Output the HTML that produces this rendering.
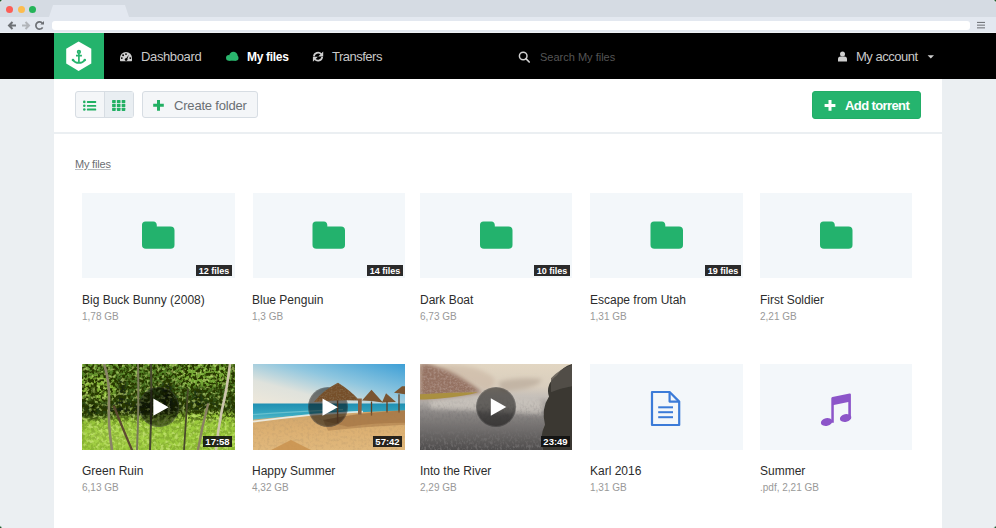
<!DOCTYPE html>
<html><head><meta charset="utf-8">
<style>
*{margin:0;padding:0;box-sizing:border-box}
html,body{width:996px;height:528px;overflow:hidden;background:#ebeff2;font-family:"Liberation Sans",sans-serif}
.a{position:absolute}
svg{display:block;overflow:visible}
#tabbar{left:0;top:0;width:996px;height:17px;background:#d5dbe3}
#tab{left:49px;top:5px;width:80px;height:12px;background:#e3e8f0;clip-path:polygon(4px 0,76px 0,80px 12px,0 12px)}
#toolbar{left:0;top:17px;width:996px;height:16px;background:#e3e8f0}
#url{left:52px;top:21px;width:918px;height:9px;background:#fff;border-radius:3px}
#nav{left:0;top:33px;width:996px;height:46px;background:#000}
#logo{left:54px;top:33px;width:50px;height:46px;background:#24b36c}
#content{left:54px;top:79px;width:888px;height:449px;background:#fff}
.navtxt{font-size:13px;color:#c9c9c9;line-height:14px;white-space:nowrap}
.btn{border:1px solid #d7dde3;background:#f4f6f8;border-radius:3px}
.thumb{width:153px;height:85px;background:#f3f7fa;overflow:hidden}
.title{font-size:12px;color:#2c2c2c;line-height:14px;white-space:nowrap}
.size{font-size:10px;color:#999;line-height:12px;white-space:nowrap}
.badge{background:#2a2a2a;color:#fff;font-size:9px;font-weight:bold;line-height:12px;height:11px;overflow:hidden;text-align:center;white-space:nowrap}
.dur{background:rgba(15,15,15,.88);color:#fff;font-size:9.5px;font-weight:bold;line-height:12px;height:11px;overflow:hidden;text-align:center;white-space:nowrap}
.play{width:40px;height:40px;border-radius:50%;background:rgba(0,0,0,.5);border:1px solid rgba(255,255,255,.1)}
</style></head><body>
<div class="a" id="tabbar"></div>
<div class="a" id="tab"></div>
<div class="a" id="toolbar"></div>
<div class="a" style="left:0;top:32px;width:996px;height:1px;background:#eef1f5"></div>
<div class="a" id="url"></div>
<!-- traffic lights -->
<div class="a" style="left:6px;top:6px;width:7px;height:7px;border-radius:50%;background:#fc5e57"></div>
<div class="a" style="left:18px;top:6px;width:7px;height:7px;border-radius:50%;background:#fcbc4f"></div>
<div class="a" style="left:29px;top:6px;width:7px;height:7px;border-radius:50%;background:#25b459"></div>
<!-- toolbar icons -->
<svg class="a" style="left:0;top:17px" width="996" height="16">
 <g fill="none" stroke-width="2" stroke-linecap="butt">
  <path d="M16 8.5H10 M12.5 5 L9 8.5 L12.5 12" stroke="#6d7075"/>
  <path d="M22 8.5H28 M25.5 5 L29 8.5 L25.5 12" stroke="#b2b5ba"/>
  <path d="M42.4 6.4 A3.6 3.6 0 1 0 42.6 10.3" stroke="#6d7075" stroke-width="1.7"/>
 </g>
 <path d="M44 3.9 V7.5 H40.4 Z" fill="#6d7075"/>
 <g fill="#75787d"><rect x="977" y="4.9" width="8" height="1.1"/><rect x="977" y="7.6" width="8" height="1.1"/><rect x="977" y="10.3" width="8" height="1.1"/></g>
</svg>

<div class="a" id="nav"></div>
<div class="a" id="logo"></div>
<svg class="a" style="left:54px;top:33px" width="50" height="46">
 <polygon points="24.6,8.5 37.3,15.8 37.3,30.6 24.6,37.9 12.2,30.6 12.2,15.8" fill="#fff"/>
 <g stroke="#24b36c" fill="none" stroke-width="1.7">
  <circle cx="24.9" cy="18.9" r="1.3"/>
  <path d="M24.9 20.2 V29.6 M22 22.6 H27.9"/>
  <path d="M19.2 27.2 Q21 29.9 24.9 29.9 Q28.8 29.9 30.6 27.2"/>
 </g>
 <g fill="#24b36c"><circle cx="19" cy="27" r="1.3"/><circle cx="30.8" cy="27" r="1.3"/></g>
</svg>
<div class="a" id="content"></div>

<!-- nav icons -->
<svg class="a" style="left:0;top:33px" width="996" height="46">
 <!-- gauge -->
 <path d="M120 27.6 V25 A6 6 0 0 1 132 25 V27.6 Q132 28.2 131.4 28.2 H120.6 Q120 28.2 120 27.6 Z" fill="#cfcfcf"/>
 <g fill="#000"><circle cx="126" cy="21.1" r="0.95"/><circle cx="123.1" cy="22.3" r="0.95"/><circle cx="121.8" cy="25.1" r="0.95"/><circle cx="130.3" cy="25.1" r="0.95"/></g>
 <path d="M125.3 26.6 L128.9 21.7 L127 27 Z" fill="#000"/><circle cx="126.1" cy="26.6" r="1.3" fill="#000"/>
 <!-- cloud -->
 <g fill="#2ab56d"><circle cx="228.9" cy="24.8" r="2.9"/><circle cx="233.4" cy="23" r="4.2"/><circle cx="235.8" cy="25" r="2.7"/><rect x="228.9" y="24" width="7" height="3.7"/></g>
 <!-- refresh -->
 <g fill="none" stroke="#cfcfcf" stroke-width="1.7">
  <path d="M313.9 23.4 A4.2 4.2 0 0 1 321.2 21"/>
  <path d="M322.2 23.8 A4.2 4.2 0 0 1 314.9 26.2"/>
 </g>
 <path d="M323.2 18.4 V23.4 H318.2 Z M312.9 28.8 V23.8 H317.9 Z" fill="#cfcfcf"/>
 <!-- search -->
 <circle cx="523.2" cy="23" r="3.8" fill="none" stroke="#cfcfcf" stroke-width="1.5"/>
 <path d="M525.9 25.7 L529.2 29" stroke="#cfcfcf" stroke-width="1.7" stroke-linecap="round"/>
 <!-- user -->
 <circle cx="842.5" cy="21" r="2.5" fill="#cfcfcf"/>
 <path d="M838 28.5 V26 Q838 23.4 840.6 23.4 H844.4 Q847 23.4 847 26 V28.5 Z" fill="#cfcfcf"/>
 <!-- caret -->
 <path d="M927.6 22.2 H934 L930.8 25.4 Z" fill="#cfcfcf"/>
</svg>

<div class="a navtxt" style="left:141px;top:50px;letter-spacing:-0.37px">Dashboard</div>
<div class="a navtxt" style="left:247px;top:50px;color:#fff;font-weight:bold;font-size:12px;letter-spacing:-0.3px">My files</div>
<div class="a navtxt" style="left:332px;top:50px;letter-spacing:-0.5px">Transfers</div>
<div class="a navtxt" style="left:540px;top:50px;font-size:11px;color:#555">Search My files</div>
<div class="a navtxt" style="left:856px;top:50px;letter-spacing:-0.49px">My account</div>

<!-- toolbar buttons -->
<div class="a btn" style="left:75px;top:91px;width:59px;height:27px"></div>
<div class="a" style="left:104px;top:92px;width:29px;height:25px;background:#e9eef2;border-left:1px solid #d7dde3"></div>
<svg class="a" style="left:75px;top:91px" width="60" height="27">
 <g fill="#22b063">
  <circle cx="9.3" cy="10.9" r="1.3"/><circle cx="9.3" cy="14.8" r="1.3"/><circle cx="9.3" cy="18.5" r="1.3"/>
  <rect x="11.9" y="10" width="9.3" height="1.9" rx=".6"/><rect x="11.9" y="13.9" width="9.3" height="1.9" rx=".6"/><rect x="11.9" y="17.6" width="9.3" height="1.9" rx=".6"/>
  <rect x="37.1" y="8.9" width="3.6" height="3.2" rx=".6"/><rect x="41.9" y="8.9" width="3.6" height="3.2" rx=".6"/><rect x="46.7" y="8.9" width="3.6" height="3.2" rx=".6"/>
  <rect x="37.1" y="12.8" width="3.6" height="3.2" rx=".6"/><rect x="41.9" y="12.8" width="3.6" height="3.2" rx=".6"/><rect x="46.7" y="12.8" width="3.6" height="3.2" rx=".6"/>
  <rect x="37.1" y="16.7" width="3.6" height="3.2" rx=".6"/><rect x="41.9" y="16.7" width="3.6" height="3.2" rx=".6"/><rect x="46.7" y="16.7" width="3.6" height="3.2" rx=".6"/>
 </g>
</svg>
<div class="a btn" style="left:142px;top:91px;width:116px;height:27px"></div>
<svg class="a" style="left:142px;top:91px" width="30" height="27">
 <path d="M16.5 9 V19.7 M11.2 14.35 H21.8" stroke="#22b063" stroke-width="3"/>
</svg>
<div class="a" style="left:174px;top:99px;font-size:13px;color:#6a6f74;line-height:14px;letter-spacing:-0.19px;white-space:nowrap">Create folder</div>
<div class="a" style="left:812px;top:91px;width:109px;height:28px;background:#25b46e;border-radius:3px;border:1px solid #22ad67"></div>
<svg class="a" style="left:812px;top:91px" width="30" height="28">
 <path d="M18 9 V19.8 M12.6 14.4 H23.4" stroke="#fff" stroke-width="3"/>
</svg>
<div class="a" style="left:845px;top:99px;font-size:13px;color:#fff;font-weight:bold;line-height:14px;letter-spacing:-0.6px;white-space:nowrap">Add torrent</div>
<div class="a" style="left:54px;top:132px;width:888px;height:2px;background:#ebeff2"></div>

<div class="a" style="left:75px;top:158px;font-size:11px;color:#6b6e72;line-height:13px;text-decoration:underline;text-decoration-color:#b9bcbf;letter-spacing:-0.2px;white-space:nowrap">My files</div>

<!-- row 1 -->
<div class="a thumb" style="left:82px;top:193px"></div>
<div class="a thumb" style="left:253px;top:193px;width:152px"></div>
<div class="a thumb" style="left:420px;top:193px;width:152px"></div>
<div class="a thumb" style="left:590px;top:193px"></div>
<div class="a thumb" style="left:760px;top:193px;width:152px"></div>
<svg class="a" style="left:0;top:0" width="996" height="528">
 <path transform="translate(142 221.5)" d="M0 3.5 Q0 0 3.5 0 H11.5 Q14.5 0 14.8 3.5 L14.8 5 H28.5 Q32.5 5 32.5 9 V23.5 Q32.5 27.3 28.5 27.3 H4 Q0 27.3 0 23.5 Z" fill="#23b26d"/>
 <path transform="translate(312.5 221.5)" d="M0 3.5 Q0 0 3.5 0 H11.5 Q14.5 0 14.8 3.5 L14.8 5 H28.5 Q32.5 5 32.5 9 V23.5 Q32.5 27.3 28.5 27.3 H4 Q0 27.3 0 23.5 Z" fill="#23b26d"/>
 <path transform="translate(480 221.5)" d="M0 3.5 Q0 0 3.5 0 H11.5 Q14.5 0 14.8 3.5 L14.8 5 H28.5 Q32.5 5 32.5 9 V23.5 Q32.5 27.3 28.5 27.3 H4 Q0 27.3 0 23.5 Z" fill="#23b26d"/>
 <path transform="translate(650.5 221.5)" d="M0 3.5 Q0 0 3.5 0 H11.5 Q14.5 0 14.8 3.5 L14.8 5 H28.5 Q32.5 5 32.5 9 V23.5 Q32.5 27.3 28.5 27.3 H4 Q0 27.3 0 23.5 Z" fill="#23b26d"/>
 <path transform="translate(820 221.5)" d="M0 3.5 Q0 0 3.5 0 H11.5 Q14.5 0 14.8 3.5 L14.8 5 H28.5 Q32.5 5 32.5 9 V23.5 Q32.5 27.3 28.5 27.3 H4 Q0 27.3 0 23.5 Z" fill="#23b26d"/>
</svg>
<div class="a badge" style="left:196px;top:265px;width:36px">12 files</div>
<div class="a badge" style="left:367px;top:265px;width:36px">14 files</div>
<div class="a badge" style="left:534px;top:265px;width:36px">10 files</div>
<div class="a badge" style="left:705px;top:265px;width:36px">19 files</div>

<div class="a title" style="left:82px;top:292.5px">Big Buck Bunny (2008)</div>
<div class="a size" style="left:82px;top:311px">1,78 GB</div>
<div class="a title" style="left:252px;top:292.5px">Blue Penguin</div>
<div class="a size" style="left:252px;top:311px">1,3 GB</div>
<div class="a title" style="left:420px;top:292.5px">Dark Boat</div>
<div class="a size" style="left:420px;top:311px">6,73 GB</div>
<div class="a title" style="left:590px;top:292.5px">Escape from Utah</div>
<div class="a size" style="left:590px;top:311px">1,31 GB</div>
<div class="a title" style="left:760px;top:292.5px">First Soldier</div>
<div class="a size" style="left:760px;top:311px">2,21 GB</div>

<!-- row 2 -->
<svg class="a" style="left:82px;top:364px" width="153" height="86" viewBox="0 0 153 85" preserveAspectRatio="none">
 <defs>
  <filter id="bl1" x="-20%" y="-20%" width="140%" height="140%"><feGaussianBlur stdDeviation="2.2"/></filter>
  <filter id="bl2" x="-20%" y="-20%" width="140%" height="140%"><feGaussianBlur stdDeviation="0.6"/></filter>
  <filter id="tx1" x="0" y="0" width="100%" height="100%"><feTurbulence type="fractalNoise" baseFrequency="0.32" numOctaves="2" seed="7"/><feColorMatrix type="matrix" values="0 0 0 0 0.02  0 0 0 0 0.04  0 0 0 0 0.0  0 0 -6 0 3.5"/></filter>
  <filter id="tx2" x="0" y="0" width="100%" height="100%"><feTurbulence type="fractalNoise" baseFrequency="0.28" numOctaves="2" seed="11"/><feColorMatrix type="matrix" values="0 0 0 0 0.66  0 0 0 0 0.86  0 0 0 0 0.24  5 0 0 0 -2.6"/></filter>
  <linearGradient id="g1" x1="0" y1="0" x2="0" y2="1">
   <stop offset="0" stop-color="#5a8a28"/><stop offset=".35" stop-color="#3e621c"/><stop offset=".52" stop-color="#253c10"/><stop offset=".6" stop-color="#3a5818"/><stop offset=".68" stop-color="#8dbd38"/><stop offset="1" stop-color="#98c63c"/>
  </linearGradient>
  <clipPath id="c1"><rect width="153" height="85"/></clipPath>
  <linearGradient id="m1g" x1="0" y1="0" x2="0" y2="1"><stop offset="0" stop-color="#fff"/><stop offset=".55" stop-color="#fff"/><stop offset=".7" stop-color="#333"/><stop offset="1" stop-color="#222"/></linearGradient>
  <mask id="m1"><rect width="153" height="85" fill="url(#m1g)"/></mask>
 </defs>
 <g clip-path="url(#c1)">
 <rect width="153" height="85" fill="url(#g1)"/>
 <g filter="url(#bl1)">
  <ellipse cx="16" cy="24" rx="18" ry="13" fill="#88b838"/>
  <ellipse cx="122" cy="12" rx="28" ry="11" fill="#74a834"/>
  <ellipse cx="60" cy="44" rx="38" ry="7" fill="#1c2a0a"/>
  <ellipse cx="112" cy="42" rx="26" ry="6" fill="#22340e"/>
  <rect x="8" y="20" width="6" height="36" fill="#101a06"/>
  <rect x="36" y="15" width="8" height="40" fill="#152008"/>
  <rect x="80" y="18" width="10" height="34" fill="#142008"/>
  <rect x="112" y="22" width="8" height="28" fill="#18260a"/>
  <path d="M0 56 Q30 51 60 53 Q100 48 153 47 V85 H0 Z" fill="#9ccb3e"/>
  <ellipse cx="35" cy="72" rx="30" ry="10" fill="#a6d246"/>
 </g>
 <g mask="url(#m1)"><rect width="153" height="85" filter="url(#tx1)"/></g>
 <rect width="153" height="85" filter="url(#tx2)" opacity=".55"/>
 <g filter="url(#bl2)" stroke-linecap="round" fill="none">
  <path d="M22 0 Q28 18 27 38 Q26 60 30 85" stroke="#8a8468" stroke-width="2.6"/>
  <path d="M32 42 Q40 62 50 85" stroke="#5c4a30" stroke-width="2.2"/>
  <path d="M56 0 Q57 40 55 85" stroke="#7a7a5a" stroke-width="2"/>
  <path d="M69 0 Q70 40 68 85" stroke="#4a4a30" stroke-width="2"/>
  <path d="M106 25 Q104 55 102 85" stroke="#4a4a2a" stroke-width="1.8"/>
  <path d="M126 40 Q120 62 116 85" stroke="#8a8064" stroke-width="2.4"/>
  <path d="M148 0 Q145 25 140 45 Q136 65 134 85" stroke="#cdc5ad" stroke-width="2.6"/>
 </g>
 </g>
</svg>
<svg class="a" style="left:253px;top:364px" width="152" height="86" viewBox="0 0 152 85" preserveAspectRatio="none">
 <defs>
  <linearGradient id="sky" x1="0" y1="1" x2="1" y2="0">
   <stop offset="0" stop-color="#efe8da"/><stop offset=".3" stop-color="#dfe2dc"/><stop offset=".6" stop-color="#8ec6df"/><stop offset="1" stop-color="#3d9fd6"/>
  </linearGradient>
  <linearGradient id="sea" x1="0" y1="0" x2="0" y2="1">
   <stop offset="0" stop-color="#1f8fb2"/><stop offset=".5" stop-color="#38a8c0"/><stop offset="1" stop-color="#7cc6cc"/>
  </linearGradient>
  <linearGradient id="sand" x1="0" y1="0" x2="0" y2="1">
   <stop offset="0" stop-color="#cfa56c"/><stop offset=".5" stop-color="#dcb072"/><stop offset="1" stop-color="#e0b87c"/>
  </linearGradient>
  <filter id="tx3" x="0" y="0" width="100%" height="100%"><feTurbulence type="fractalNoise" baseFrequency="0.35" numOctaves="2" seed="4"/><feColorMatrix type="matrix" values="0 0 0 0 0.45  0 0 0 0 0.3  0 0 0 0 0.15  0 0 -3 0 1.6"/></filter>
  <clipPath id="c2"><rect width="152" height="85"/></clipPath>
  <mask id="m2"><path d="M0 58 Q60 52 152 46 V85 H0 Z" fill="#fff"/></mask>
 </defs>
 <g clip-path="url(#c2)">
 <rect width="152" height="40" fill="url(#sky)"/>
 <path d="M0 39 H152 V50 Q100 52 60 55 Q30 58 0 60 Z" fill="url(#sea)"/>
 <path d="M0 55 Q40 51 80 49 Q120 47 152 46 V85 H0 Z" fill="url(#sand)"/>
 <g mask="url(#m2)"><rect width="152" height="85" filter="url(#tx3)" opacity=".3"/></g>
 <g filter="url(#bl2)">
  <path d="M0 57 Q30 53 60 50 Q90 48 110 47" stroke="#eef4f2" stroke-width="1.8" fill="none" opacity=".85"/>
  <path d="M0 50 Q40 47 90 45" stroke="#7ccad4" stroke-width="1.2" fill="none" opacity=".7"/>
  <path d="M70 55 Q110 48 152 46 V60 Q110 62 75 66 Z" fill="#a87a48" opacity=".55"/>
  <path d="M18 85 L38 75 L58 85 Z" fill="#c8904e" opacity=".8"/>
 </g>
 <g fill="#7a5530" filter="url(#bl2)">
  <path d="M109 36 L118.5 25.5 L130 38 Q118 36 109 36 Z"/>
  <path d="M129 38 L133 29 L143 37.5 Z"/>
  <path d="M141 28.5 L149 22 L152 22 V30 Z"/>
 </g>
 <g stroke="#5e4024" stroke-width="1.3">
  <path d="M118.5 37 V51"/><path d="M134 37 V48"/><path d="M146 30 V48"/>
 </g>
 <path d="M70 56 Q100 48 152 46 V58 Q120 58 95 62 Z" fill="#9a6a3a" opacity=".45" filter="url(#bl2)"/>
 </g>
</svg>
<svg class="a" style="left:420px;top:364px" width="152" height="86" viewBox="0 0 152 85" preserveAspectRatio="none">
 <defs>
  <linearGradient id="rv" x1="0" y1="0" x2="0" y2="1">
   <stop offset="0" stop-color="#e2d6c2"/><stop offset=".26" stop-color="#d9cebe"/><stop offset=".38" stop-color="#c4beb8"/><stop offset=".55" stop-color="#8e8a88"/><stop offset="1" stop-color="#4e4c4c"/>
  </linearGradient>
  <filter id="tx4" x="0" y="0" width="100%" height="100%"><feTurbulence type="fractalNoise" baseFrequency="0.45 0.3" numOctaves="2" seed="9"/><feColorMatrix type="matrix" values="0 0 0 0 0.18  0 0 0 0 0.17  0 0 0 0 0.17  0 0 -3.5 0 1.9"/></filter>
  <filter id="tx6" x="0" y="0" width="100%" height="100%"><feTurbulence type="fractalNoise" baseFrequency="0.5" numOctaves="2" seed="5"/><feColorMatrix type="matrix" values="0 0 0 0 0.45  0 0 0 0 0.32  0 0 0 0 0.27  0 0 -3 0 1.8"/></filter>
  <linearGradient id="m4g" x1="0" y1="0" x2="0" y2="1"><stop offset=".38" stop-color="#000"/><stop offset=".65" stop-color="#999"/><stop offset="1" stop-color="#fff"/></linearGradient>
  <mask id="m4"><rect width="152" height="85" fill="url(#m4g)"/></mask>
  <clipPath id="hill"><path d="M0 0 H8 Q30 6 45 16 Q55 22 62 28 Q30 33 0 34 Z"/></clipPath>
  <clipPath id="c3"><rect width="152" height="85"/></clipPath>
 </defs>
 <g clip-path="url(#c3)">
 <rect width="152" height="85" fill="url(#rv)"/>
 <g filter="url(#bl1)">
  <path d="M20 2 Q50 -2 72 12 Q80 20 66 26 Q45 14 20 6 Z" fill="#c9b2a0" opacity=".55"/>
  <path d="M78 18 Q98 12 122 15 Q118 25 82 27 Z" fill="#b9aa9a" opacity=".7"/>
  <path d="M10 36 Q60 32 118 34 Q126 42 122 50 Q60 46 10 44 Z" fill="#d2ccc4" opacity=".7"/>
 </g>
 <path d="M0 0 H8 Q30 6 45 16 Q55 22 62 28 Q30 33 0 34 Z" fill="#957262" filter="url(#bl1)"/>
 <g clip-path="url(#hill)"><rect width="70" height="36" filter="url(#tx6)" opacity=".6"/></g>
 <path d="M0 30 Q30 28 58 28 Q45 32 20 34 Q8 35 0 35 Z" fill="#aa9040" filter="url(#bl2)"/>
 <g mask="url(#m4)"><rect width="152" height="85" filter="url(#tx4)" opacity=".7"/></g>
 <g filter="url(#bl2)">
  <path d="M152 0 V85 H123 Q119 72 125 60 Q121 44 129 32 Q125 20 137 11 Q142 3 152 0 Z" fill="#3a3832"/>
  <path d="M131 14 Q141 4 152 1 V22 Q140 24 131 28 Z" fill="#57534c" opacity=".8"/>
 </g>
 </g>
</svg>
<div class="a thumb" style="left:590px;top:364px;height:86px"></div>
<div class="a thumb" style="left:760px;top:364px;width:152px;height:86px"></div>

<div class="a play" style="left:139px;top:386.5px"></div>
<div class="a play" style="left:308px;top:386.5px"></div>
<div class="a play" style="left:476px;top:386.5px"></div>
<svg class="a" style="left:253px;top:364px" width="152" height="86" viewBox="0 0 152 85" preserveAspectRatio="none">
 <defs><filter id="tx5" x="0" y="0" width="100%" height="100%"><feTurbulence type="fractalNoise" baseFrequency="0.6" numOctaves="1" seed="2"/><feColorMatrix type="matrix" values="0 0 0 0 0.25  0 0 0 0 0.16  0 0 0 0 0.08  0 0 -3 0 1.7"/></filter>
 <clipPath id="umb"><path d="M61 37.5 Q70 26 85 18.6 Q97 26 106.5 36 Q85 35 61 37.5 Z"/></clipPath></defs>
 <path d="M61 37.5 Q70 26 85 18.6 Q97 26 106.5 36 Q85 35 61 37.5 Z" fill="#76502c" filter="url(#bl2)"/>
 <g clip-path="url(#umb)"><rect x="55" y="15" width="55" height="25" filter="url(#tx5)" opacity=".7"/></g>
 <path d="M84.6 36 V58.5" stroke="#4e3420" stroke-width="1.4"/>
 <path d="M105 34 L108.8 34 L108.5 50 L105 50 Z" fill="#8a6040" filter="url(#bl2)"/>
</svg>
<svg class="a" style="left:0;top:0" width="996" height="528">
 <g fill="#fff">
  <path d="M153.3 398.6 V415.8 L168.6 407.2 Z"/>
  <path d="M322.5 398.6 V415.8 L337.8 407.2 Z"/>
  <path d="M490.8 398.2 V415.8 L506.3 407 Z"/>
 </g>
 <!-- doc -->
 <g fill="none" stroke="#3b7bd8" stroke-width="2.2" stroke-linejoin="round">
  <path d="M652 392 H669.6 L679.2 401.6 V425 H652 Z"/>
  <path d="M669.6 392 V401.6 H679.2"/>
 </g>
 <g fill="#3b7bd8"><rect x="658.2" y="406.3" width="14.8" height="2"/><rect x="658.2" y="411.2" width="14.8" height="2"/><rect x="658.2" y="416.2" width="14.8" height="2"/></g>
 <!-- music -->
 <g fill="#8c55c9">
  <path d="M831.3 398.5 Q831.3 397.4 832.4 397.1 L849.6 393.5 Q850.9 393.3 850.9 394.5 V419 H848.3 V401.9 L833.8 405 V422.8 H831.3 Z"/>
  <ellipse cx="826.6" cy="422" rx="5.8" ry="3.9" transform="rotate(-12 826.6 422)"/>
  <ellipse cx="845.6" cy="418" rx="5.8" ry="3.9" transform="rotate(-12 845.6 418)"/>
 </g>
</svg>
<div class="a dur" style="left:203px;top:436px;width:29px">17:58</div>
<div class="a dur" style="left:373px;top:436px;width:29px">57:42</div>
<div class="a dur" style="left:541px;top:436px;width:29px">23:49</div>

<div class="a title" style="left:82px;top:463.5px">Green Ruin</div>
<div class="a size" style="left:82px;top:482px">6,13 GB</div>
<div class="a title" style="left:252px;top:463.5px">Happy Summer</div>
<div class="a size" style="left:252px;top:482px">4,32 GB</div>
<div class="a title" style="left:420px;top:463.5px">Into the River</div>
<div class="a size" style="left:420px;top:482px">2,29 GB</div>
<div class="a title" style="left:590px;top:463.5px">Karl 2016</div>
<div class="a size" style="left:590px;top:482px">1,31 GB</div>
<div class="a title" style="left:760px;top:463.5px">Summer</div>
<div class="a size" style="left:760px;top:482px">.pdf, 2,21 GB</div>

<svg class="a" style="left:0;top:0" width="996" height="528">
 <g fill="#1f5c2b" stroke="#eef1f7" stroke-width="1">
  <circle cx="-0.5" cy="-0.5" r="2.8"/><circle cx="996.5" cy="-0.5" r="2.8"/><circle cx="-0.5" cy="528.5" r="2.8"/><circle cx="996.5" cy="528.5" r="2.8"/>
 </g>
</svg>
</body></html>
